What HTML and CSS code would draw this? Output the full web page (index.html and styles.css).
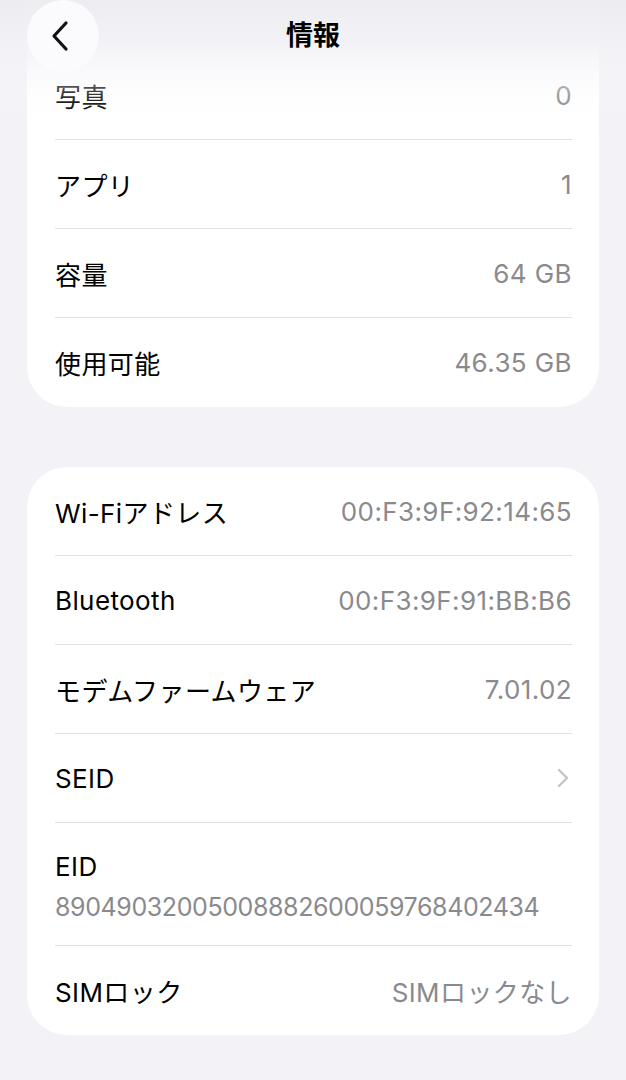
FILE: index.html
```html
<!DOCTYPE html>
<html lang="ja">
<head>
<meta charset="utf-8">
<title>情報</title>
<link rel="stylesheet" href="styles.css">
</head>
<body>
<header class="nav">
  <button class="back" aria-label="戻る">
    <svg width="22" height="32" viewBox="0 0 22 32"><path d="M16 3 L4 16 L16 29" fill="none" stroke="#111" stroke-width="3.2" stroke-linecap="round" stroke-linejoin="round"/></svg>
  </button>
  <h1 class="title">情報</h1>
</header>
<main class="page">
  <section class="card card-top">
    <div class="row"><span class="label">写真</span><span class="value">0</span></div>
    <div class="row"><span class="label">アプリ</span><span class="value">1</span></div>
    <div class="row"><span class="label">容量</span><span class="value">64 GB</span></div>
    <div class="row"><span class="label">使用可能</span><span class="value">46.35 GB</span></div>
  </section>
  <section class="card">
    <div class="row"><span class="label">Wi-Fiアドレス</span><span class="value">00:F3:9F:92:14:65</span></div>
    <div class="row"><span class="label">Bluetooth</span><span class="value">00:F3:9F:91:BB:B6</span></div>
    <div class="row"><span class="label">モデムファームウェア</span><span class="value">7.01.02</span></div>
    <div class="row"><span class="label">SEID</span><svg class="chev" width="14" height="20" viewBox="0 0 14 20"><path d="M3 2 L11 10 L3 18" fill="none" stroke="#c4c4c7" stroke-width="2.4" stroke-linecap="round" stroke-linejoin="round"/></svg></div>
    <div class="row row-stack"><span class="label">EID</span><span class="value">89049032005008882600059768402434</span></div>
    <div class="row"><span class="label">SIMロック</span><span class="value">SIMロックなし</span></div>
  </section>
</main>
</body>
</html>
```
FILE: styles.css
```css
* { box-sizing: border-box; }
html, body { margin: 0; padding: 0; }
body {
  background: #f2f2f7;
  font-family: "Inter", "Noto Sans CJK JP", sans-serif;
  color: #000;
  width: 626px;
  height: 1080px;
  overflow: hidden;
  position: relative;
}
.nav {
  position: absolute;
  top: 0; left: 0; right: 0;
  height: 130px;
  background: linear-gradient(to bottom,
    rgba(236,236,241,1) 0px,
    rgba(240,240,245,0.92) 35px,
    rgba(245,245,249,0.55) 70px,
    rgba(250,250,252,0.15) 100px,
    rgba(255,255,255,0) 130px);
  z-index: 5;
}
.back {
  position: absolute;
  left: 27px; top: 0;
  width: 72px; height: 72px;
  border-radius: 50%;
  border: none;
  background: #fbfbfd;
  display: flex; align-items: center; justify-content: center;
  padding: 0 4px 0 0;
}
.title {
  margin: 0;
  position: absolute;
  left: 0; right: 0; top: 18px;
  text-align: center;
  font-size: 27px;
  line-height: 36px;
  font-weight: 700;
}
.page {
  padding: 0 27px;
  display: flex;
  flex-direction: column;
  gap: 60px;
}
.card {
  background: #fff;
  border-radius: 40px;
  padding: 0 27px 0 28px;
}
.card-top { margin-top: -38px; padding-top: 89px; }
.row {
  height: 89px;
  display: flex;
  align-items: center;
  justify-content: space-between;
  border-bottom: 1px solid #e2e2e4;
  font-size: 26px;
  letter-spacing: 0.4px;
}
.row:last-child { border-bottom: none; }
.value { color: #8a8a8e; }
.chev { margin-right: 2px; }
.row-stack {
  height: 123px;
  flex-direction: column;
  align-items: flex-start;
  justify-content: flex-start;
  padding: 28px 0 22px;
  gap: 8px;
}
.row-stack span { line-height: 32px; }
.row-stack .value { font-size: 25px; letter-spacing: -0.4px; }
```
